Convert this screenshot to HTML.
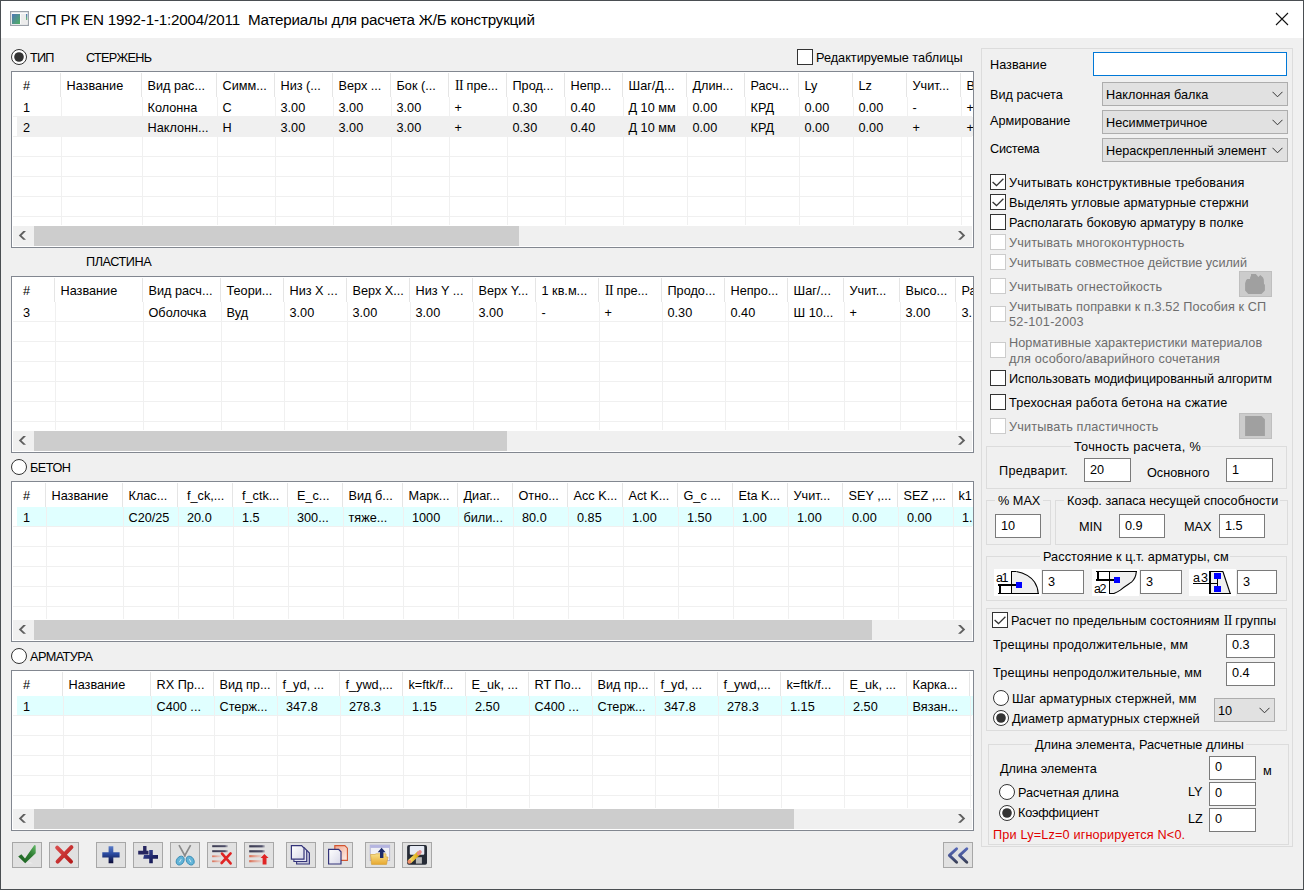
<!DOCTYPE html>
<html><head><meta charset="utf-8"><style>
html,body{margin:0;padding:0;width:1304px;height:890px;overflow:hidden;background:#f0f0f0}
#w{position:relative;width:1304px;height:890px;overflow:hidden;font-family:"Liberation Sans",sans-serif;font-size:12.7px;color:#000}
#w div,#w svg{position:absolute}
.t{line-height:20px;white-space:pre}
</style></head><body><div id="w">
<div style="left:0;top:0;width:1304px;height:890px;background:#f0f0f0"></div>
<div style="left:0px;top:0px;width:1304px;height:38px;background:#fff"></div>
<svg style="left:10px;top:11px" width="19" height="15" viewBox="0 0 19 15"><defs><linearGradient id="ig" x1="0" y1="0" x2="1" y2="1"><stop offset="0" stop-color="#4f76b8"/><stop offset="1" stop-color="#4fb060"/></linearGradient><linearGradient id="ig2" x1="0" y1="0" x2="0" y2="1"><stop offset="0" stop-color="#4f76b8"/><stop offset="1" stop-color="#6fc070"/></linearGradient></defs><rect x="0.6" y="0.6" width="17.8" height="13.8" fill="#fafafa" stroke="#9ca2aa" stroke-width="1.2"/><rect x="2" y="3" width="8" height="10" fill="url(#ig)"/><rect x="11" y="3" width="6" height="10" fill="#ececec"/><rect x="16" y="3" width="1.3" height="6" fill="url(#ig2)"/></svg>
<div class="t" style="left:35px;top:11px;font-size:15.2px;letter-spacing:-0.2px;top:8.5px;line-height:22px">СП РК EN 1992-1-1:2004/2011  Материалы для расчета Ж/Б конструкций</div>
<svg style="left:1275px;top:12px" width="14" height="14" viewBox="0 0 14 14"><path d="M1 1 L13 13 M13 1 L1 13" stroke="#111" stroke-width="1.1"/></svg>
<svg style="left:11px;top:49px" width="16" height="16" viewBox="0 0 16 16"><circle cx="8" cy="8" r="7.5" fill="#fff" stroke="#333" stroke-width="1"/><circle cx="8" cy="8" r="4.8" fill="#333"/></svg>
<div class="t" style="left:30px;top:48px;letter-spacing:-0.8px">ТИП</div>
<div class="t" style="left:86px;top:48px;letter-spacing:-0.7px">СТЕРЖЕНЬ</div>
<div style="left:797px;top:49px;width:16px;height:16px;box-sizing:border-box;border:1px solid #333333;background:#fff"></div>
<div class="t" style="left:816px;top:48px;">Редактируемые таблицы</div>
<div style="left:11px;top:71px;width:963px;height:177px;box-sizing:border-box;border:1px solid #828790;background:#fff"></div>
<div style="left:0;top:0;width:973px;height:890px;overflow:hidden">
<div style="left:13px;top:116px;width:959px;height:1px;background:#f0f0f0"></div>
<div style="left:13px;top:136px;width:959px;height:1px;background:#f0f0f0"></div>
<div style="left:13px;top:156px;width:959px;height:1px;background:#f0f0f0"></div>
<div style="left:13px;top:176px;width:959px;height:1px;background:#f0f0f0"></div>
<div style="left:13px;top:196px;width:959px;height:1px;background:#f0f0f0"></div>
<div style="left:13px;top:216px;width:959px;height:1px;background:#f0f0f0"></div>
<div style="left:17px;top:117px;width:956px;height:19px;background:#f0f0f0"></div>
<div style="left:61px;top:97px;width:1px;height:128px;background:#f0f0f0"></div>
<div style="left:60px;top:73px;width:1px;height:24px;background:#e5e5e5"></div>
<div style="left:142px;top:97px;width:1px;height:128px;background:#f0f0f0"></div>
<div style="left:141px;top:73px;width:1px;height:24px;background:#e5e5e5"></div>
<div style="left:217px;top:97px;width:1px;height:128px;background:#f0f0f0"></div>
<div style="left:216px;top:73px;width:1px;height:24px;background:#e5e5e5"></div>
<div style="left:275px;top:97px;width:1px;height:128px;background:#f0f0f0"></div>
<div style="left:274px;top:73px;width:1px;height:24px;background:#e5e5e5"></div>
<div style="left:333px;top:97px;width:1px;height:128px;background:#f0f0f0"></div>
<div style="left:332px;top:73px;width:1px;height:24px;background:#e5e5e5"></div>
<div style="left:391px;top:97px;width:1px;height:128px;background:#f0f0f0"></div>
<div style="left:390px;top:73px;width:1px;height:24px;background:#e5e5e5"></div>
<div style="left:449px;top:97px;width:1px;height:128px;background:#f0f0f0"></div>
<div style="left:448px;top:73px;width:1px;height:24px;background:#e5e5e5"></div>
<div style="left:507px;top:97px;width:1px;height:128px;background:#f0f0f0"></div>
<div style="left:506px;top:73px;width:1px;height:24px;background:#e5e5e5"></div>
<div style="left:565px;top:97px;width:1px;height:128px;background:#f0f0f0"></div>
<div style="left:564px;top:73px;width:1px;height:24px;background:#e5e5e5"></div>
<div style="left:623px;top:97px;width:1px;height:128px;background:#f0f0f0"></div>
<div style="left:622px;top:73px;width:1px;height:24px;background:#e5e5e5"></div>
<div style="left:687px;top:97px;width:1px;height:128px;background:#f0f0f0"></div>
<div style="left:686px;top:73px;width:1px;height:24px;background:#e5e5e5"></div>
<div style="left:745px;top:97px;width:1px;height:128px;background:#f0f0f0"></div>
<div style="left:744px;top:73px;width:1px;height:24px;background:#e5e5e5"></div>
<div style="left:799px;top:97px;width:1px;height:128px;background:#f0f0f0"></div>
<div style="left:798px;top:73px;width:1px;height:24px;background:#e5e5e5"></div>
<div style="left:853px;top:97px;width:1px;height:128px;background:#f0f0f0"></div>
<div style="left:852px;top:73px;width:1px;height:24px;background:#e5e5e5"></div>
<div style="left:907px;top:97px;width:1px;height:128px;background:#f0f0f0"></div>
<div style="left:906px;top:73px;width:1px;height:24px;background:#e5e5e5"></div>
<div style="left:961px;top:97px;width:1px;height:128px;background:#f0f0f0"></div>
<div style="left:960px;top:73px;width:1px;height:24px;background:#e5e5e5"></div>
<div class="t" style="left:23px;top:76px;">#</div>
<div class="t" style="left:66.5px;top:76px;">Название</div>
<div class="t" style="left:147.5px;top:76px;">Вид рас...</div>
<div class="t" style="left:222.5px;top:76px;">Симм...</div>
<div class="t" style="left:280.5px;top:76px;">Низ (...</div>
<div class="t" style="left:338.5px;top:76px;">Верх ...</div>
<div class="t" style="left:396.5px;top:76px;">Бок (...</div>
<div class="t" style="left:454.5px;top:76px;"><span style="font-family:'Liberation Serif',serif;font-size:13.6px;letter-spacing:-0.5px;margin-left:0.5px">II</span> пре...</div>
<div class="t" style="left:512.5px;top:76px;">Прод...</div>
<div class="t" style="left:570.5px;top:76px;">Непр...</div>
<div class="t" style="left:628.5px;top:76px;">Шаг/Д...</div>
<div class="t" style="left:692.5px;top:76px;">Длин...</div>
<div class="t" style="left:750.5px;top:76px;">Расч...</div>
<div class="t" style="left:804.5px;top:76px;">Ly</div>
<div class="t" style="left:858.5px;top:76px;">Lz</div>
<div class="t" style="left:912.5px;top:76px;">Учит...</div>
<div class="t" style="left:966.5px;top:76px;">В</div>
<div class="t" style="left:23px;top:98px;">1</div>
<div class="t" style="left:147.5px;top:98px;">Колонна</div>
<div class="t" style="left:222.5px;top:98px;">С</div>
<div class="t" style="left:280.5px;top:98px;">3.00</div>
<div class="t" style="left:338.5px;top:98px;">3.00</div>
<div class="t" style="left:396.5px;top:98px;">3.00</div>
<div class="t" style="left:454.5px;top:98px;">+</div>
<div class="t" style="left:512.5px;top:98px;">0.30</div>
<div class="t" style="left:570.5px;top:98px;">0.40</div>
<div class="t" style="left:628.5px;top:98px;">Д 10 мм</div>
<div class="t" style="left:692.5px;top:98px;">0.00</div>
<div class="t" style="left:750.5px;top:98px;">КРД</div>
<div class="t" style="left:804.5px;top:98px;">0.00</div>
<div class="t" style="left:858.5px;top:98px;">0.00</div>
<div class="t" style="left:912.5px;top:98px;">-</div>
<div class="t" style="left:966.5px;top:98px;">+</div>
<div class="t" style="left:23px;top:118px;">2</div>
<div class="t" style="left:147.5px;top:118px;">Наклонн...</div>
<div class="t" style="left:222.5px;top:118px;">Н</div>
<div class="t" style="left:280.5px;top:118px;">3.00</div>
<div class="t" style="left:338.5px;top:118px;">3.00</div>
<div class="t" style="left:396.5px;top:118px;">3.00</div>
<div class="t" style="left:454.5px;top:118px;">+</div>
<div class="t" style="left:512.5px;top:118px;">0.30</div>
<div class="t" style="left:570.5px;top:118px;">0.40</div>
<div class="t" style="left:628.5px;top:118px;">Д 10 мм</div>
<div class="t" style="left:692.5px;top:118px;">0.00</div>
<div class="t" style="left:750.5px;top:118px;">КРД</div>
<div class="t" style="left:804.5px;top:118px;">0.00</div>
<div class="t" style="left:858.5px;top:118px;">0.00</div>
<div class="t" style="left:912.5px;top:118px;">+</div>
<div class="t" style="left:966.5px;top:118px;">+</div>
<div style="left:13px;top:226px;width:959px;height:20px;background:#f0f0f0"></div>
<div style="left:34px;top:226px;width:485px;height:20px;background:#cdcdcd"></div>
<svg style="left:18px;top:231px" width="9" height="11" viewBox="0 0 9 11"><path d="M8 0 H5.3 L0.8 4.4 L5.3 8.8 H8 L3.5 4.4 Z" fill="#606060"/></svg>
<svg style="left:958px;top:231px" width="9" height="11" viewBox="0 0 9 11"><path d="M0 0 H2.7 L7.2 4.4 L2.7 8.8 H0 L4.5 4.4 Z" fill="#606060"/></svg>
</div>
<div class="t" style="left:86px;top:252px;letter-spacing:-0.45px">ПЛАСТИНА</div>
<div style="left:11px;top:276px;width:963px;height:177px;box-sizing:border-box;border:1px solid #828790;background:#fff"></div>
<div style="left:0;top:0;width:973px;height:890px;overflow:hidden">
<div style="left:13px;top:321px;width:959px;height:1px;background:#f0f0f0"></div>
<div style="left:13px;top:341px;width:959px;height:1px;background:#f0f0f0"></div>
<div style="left:13px;top:361px;width:959px;height:1px;background:#f0f0f0"></div>
<div style="left:13px;top:381px;width:959px;height:1px;background:#f0f0f0"></div>
<div style="left:13px;top:401px;width:959px;height:1px;background:#f0f0f0"></div>
<div style="left:13px;top:421px;width:959px;height:1px;background:#f0f0f0"></div>
<div style="left:55px;top:302px;width:1px;height:128px;background:#f0f0f0"></div>
<div style="left:54px;top:278px;width:1px;height:24px;background:#e5e5e5"></div>
<div style="left:143px;top:302px;width:1px;height:128px;background:#f0f0f0"></div>
<div style="left:142px;top:278px;width:1px;height:24px;background:#e5e5e5"></div>
<div style="left:221px;top:302px;width:1px;height:128px;background:#f0f0f0"></div>
<div style="left:220px;top:278px;width:1px;height:24px;background:#e5e5e5"></div>
<div style="left:284px;top:302px;width:1px;height:128px;background:#f0f0f0"></div>
<div style="left:283px;top:278px;width:1px;height:24px;background:#e5e5e5"></div>
<div style="left:347px;top:302px;width:1px;height:128px;background:#f0f0f0"></div>
<div style="left:346px;top:278px;width:1px;height:24px;background:#e5e5e5"></div>
<div style="left:410px;top:302px;width:1px;height:128px;background:#f0f0f0"></div>
<div style="left:409px;top:278px;width:1px;height:24px;background:#e5e5e5"></div>
<div style="left:473px;top:302px;width:1px;height:128px;background:#f0f0f0"></div>
<div style="left:472px;top:278px;width:1px;height:24px;background:#e5e5e5"></div>
<div style="left:536px;top:302px;width:1px;height:128px;background:#f0f0f0"></div>
<div style="left:535px;top:278px;width:1px;height:24px;background:#e5e5e5"></div>
<div style="left:599px;top:302px;width:1px;height:128px;background:#f0f0f0"></div>
<div style="left:598px;top:278px;width:1px;height:24px;background:#e5e5e5"></div>
<div style="left:662px;top:302px;width:1px;height:128px;background:#f0f0f0"></div>
<div style="left:661px;top:278px;width:1px;height:24px;background:#e5e5e5"></div>
<div style="left:725px;top:302px;width:1px;height:128px;background:#f0f0f0"></div>
<div style="left:724px;top:278px;width:1px;height:24px;background:#e5e5e5"></div>
<div style="left:788px;top:302px;width:1px;height:128px;background:#f0f0f0"></div>
<div style="left:787px;top:278px;width:1px;height:24px;background:#e5e5e5"></div>
<div style="left:844px;top:302px;width:1px;height:128px;background:#f0f0f0"></div>
<div style="left:843px;top:278px;width:1px;height:24px;background:#e5e5e5"></div>
<div style="left:900px;top:302px;width:1px;height:128px;background:#f0f0f0"></div>
<div style="left:899px;top:278px;width:1px;height:24px;background:#e5e5e5"></div>
<div style="left:956px;top:302px;width:1px;height:128px;background:#f0f0f0"></div>
<div style="left:955px;top:278px;width:1px;height:24px;background:#e5e5e5"></div>
<div class="t" style="left:23px;top:281px;">#</div>
<div class="t" style="left:60.5px;top:281px;">Название</div>
<div class="t" style="left:148.5px;top:281px;">Вид расч...</div>
<div class="t" style="left:226.5px;top:281px;">Теори...</div>
<div class="t" style="left:289.5px;top:281px;">Низ X ...</div>
<div class="t" style="left:352.5px;top:281px;">Верх X...</div>
<div class="t" style="left:415.5px;top:281px;">Низ Y ...</div>
<div class="t" style="left:478.5px;top:281px;">Верх Y...</div>
<div class="t" style="left:541.5px;top:281px;">1 кв.м...</div>
<div class="t" style="left:604.5px;top:281px;"><span style="font-family:'Liberation Serif',serif;font-size:13.6px;letter-spacing:-0.5px;margin-left:0.5px">II</span> пре...</div>
<div class="t" style="left:667.5px;top:281px;">Продо...</div>
<div class="t" style="left:730.5px;top:281px;">Непро...</div>
<div class="t" style="left:793.5px;top:281px;">Шаг/...</div>
<div class="t" style="left:849.5px;top:281px;">Учит...</div>
<div class="t" style="left:905.5px;top:281px;">Высо...</div>
<div class="t" style="left:961.5px;top:281px;">Ра</div>
<div class="t" style="left:23px;top:303px;">3</div>
<div class="t" style="left:148.5px;top:303px;">Оболочка</div>
<div class="t" style="left:226.5px;top:303px;">Вуд</div>
<div class="t" style="left:289.5px;top:303px;">3.00</div>
<div class="t" style="left:352.5px;top:303px;">3.00</div>
<div class="t" style="left:415.5px;top:303px;">3.00</div>
<div class="t" style="left:478.5px;top:303px;">3.00</div>
<div class="t" style="left:541.5px;top:303px;">-</div>
<div class="t" style="left:604.5px;top:303px;">+</div>
<div class="t" style="left:667.5px;top:303px;">0.30</div>
<div class="t" style="left:730.5px;top:303px;">0.40</div>
<div class="t" style="left:793.5px;top:303px;">Ш 10...</div>
<div class="t" style="left:849.5px;top:303px;">+</div>
<div class="t" style="left:905.5px;top:303px;">3.00</div>
<div class="t" style="left:961.5px;top:303px;">3.</div>
<div style="left:13px;top:431px;width:959px;height:20px;background:#f0f0f0"></div>
<div style="left:34px;top:431px;width:473px;height:20px;background:#cdcdcd"></div>
<svg style="left:18px;top:436px" width="9" height="11" viewBox="0 0 9 11"><path d="M8 0 H5.3 L0.8 4.4 L5.3 8.8 H8 L3.5 4.4 Z" fill="#606060"/></svg>
<svg style="left:958px;top:436px" width="9" height="11" viewBox="0 0 9 11"><path d="M0 0 H2.7 L7.2 4.4 L2.7 8.8 H0 L4.5 4.4 Z" fill="#606060"/></svg>
</div>
<svg style="left:11px;top:459px" width="16" height="16" viewBox="0 0 16 16"><circle cx="8" cy="8" r="7.5" fill="#fff" stroke="#333" stroke-width="1"/></svg>
<div class="t" style="left:30px;top:458px;letter-spacing:-0.5px">БЕТОН</div>
<div style="left:11px;top:481px;width:963px;height:161px;box-sizing:border-box;border:1px solid #828790;background:#fff"></div>
<div style="left:0;top:0;width:973px;height:890px;overflow:hidden">
<div style="left:13px;top:526px;width:959px;height:1px;background:#f0f0f0"></div>
<div style="left:13px;top:546px;width:959px;height:1px;background:#f0f0f0"></div>
<div style="left:13px;top:566px;width:959px;height:1px;background:#f0f0f0"></div>
<div style="left:13px;top:586px;width:959px;height:1px;background:#f0f0f0"></div>
<div style="left:13px;top:606px;width:959px;height:1px;background:#f0f0f0"></div>
<div style="left:17px;top:507px;width:956px;height:19px;background:#e0ffff"></div>
<div style="left:46px;top:507px;width:1px;height:112px;background:#f0f0f0"></div>
<div style="left:45px;top:483px;width:1px;height:24px;background:#e5e5e5"></div>
<div style="left:123px;top:507px;width:1px;height:112px;background:#f0f0f0"></div>
<div style="left:122px;top:483px;width:1px;height:24px;background:#e5e5e5"></div>
<div style="left:178px;top:507px;width:1px;height:112px;background:#f0f0f0"></div>
<div style="left:177px;top:483px;width:1px;height:24px;background:#e5e5e5"></div>
<div style="left:233px;top:507px;width:1px;height:112px;background:#f0f0f0"></div>
<div style="left:232px;top:483px;width:1px;height:24px;background:#e5e5e5"></div>
<div style="left:288px;top:507px;width:1px;height:112px;background:#f0f0f0"></div>
<div style="left:287px;top:483px;width:1px;height:24px;background:#e5e5e5"></div>
<div style="left:343px;top:507px;width:1px;height:112px;background:#f0f0f0"></div>
<div style="left:342px;top:483px;width:1px;height:24px;background:#e5e5e5"></div>
<div style="left:403px;top:507px;width:1px;height:112px;background:#f0f0f0"></div>
<div style="left:402px;top:483px;width:1px;height:24px;background:#e5e5e5"></div>
<div style="left:458px;top:507px;width:1px;height:112px;background:#f0f0f0"></div>
<div style="left:457px;top:483px;width:1px;height:24px;background:#e5e5e5"></div>
<div style="left:513px;top:507px;width:1px;height:112px;background:#f0f0f0"></div>
<div style="left:512px;top:483px;width:1px;height:24px;background:#e5e5e5"></div>
<div style="left:568px;top:507px;width:1px;height:112px;background:#f0f0f0"></div>
<div style="left:567px;top:483px;width:1px;height:24px;background:#e5e5e5"></div>
<div style="left:623px;top:507px;width:1px;height:112px;background:#f0f0f0"></div>
<div style="left:622px;top:483px;width:1px;height:24px;background:#e5e5e5"></div>
<div style="left:678px;top:507px;width:1px;height:112px;background:#f0f0f0"></div>
<div style="left:677px;top:483px;width:1px;height:24px;background:#e5e5e5"></div>
<div style="left:733px;top:507px;width:1px;height:112px;background:#f0f0f0"></div>
<div style="left:732px;top:483px;width:1px;height:24px;background:#e5e5e5"></div>
<div style="left:788px;top:507px;width:1px;height:112px;background:#f0f0f0"></div>
<div style="left:787px;top:483px;width:1px;height:24px;background:#e5e5e5"></div>
<div style="left:843px;top:507px;width:1px;height:112px;background:#f0f0f0"></div>
<div style="left:842px;top:483px;width:1px;height:24px;background:#e5e5e5"></div>
<div style="left:898px;top:507px;width:1px;height:112px;background:#f0f0f0"></div>
<div style="left:897px;top:483px;width:1px;height:24px;background:#e5e5e5"></div>
<div style="left:953px;top:507px;width:1px;height:112px;background:#f0f0f0"></div>
<div style="left:952px;top:483px;width:1px;height:24px;background:#e5e5e5"></div>
<div class="t" style="left:23px;top:486px;">#</div>
<div class="t" style="left:51.5px;top:486px;">Название</div>
<div class="t" style="left:128.5px;top:486px;">Клас...</div>
<div class="t" style="left:187px;top:486px;">f_ck,...</div>
<div class="t" style="left:242px;top:486px;">f_ctk...</div>
<div class="t" style="left:297px;top:486px;">E_c...</div>
<div class="t" style="left:348.5px;top:486px;">Вид б...</div>
<div class="t" style="left:408.5px;top:486px;">Марк...</div>
<div class="t" style="left:463.5px;top:486px;">Диаг...</div>
<div class="t" style="left:518.5px;top:486px;">Отно...</div>
<div class="t" style="left:573.5px;top:486px;">Acc K...</div>
<div class="t" style="left:628.5px;top:486px;">Act K...</div>
<div class="t" style="left:683.5px;top:486px;">G_c ...</div>
<div class="t" style="left:738.5px;top:486px;">Eta K...</div>
<div class="t" style="left:793.5px;top:486px;">Учит...</div>
<div class="t" style="left:848.5px;top:486px;">SEY ,...</div>
<div class="t" style="left:903.5px;top:486px;">SEZ ,...</div>
<div class="t" style="left:958.5px;top:486px;">k1...</div>
<div class="t" style="left:23px;top:508px;">1</div>
<div class="t" style="left:128.5px;top:508px;">C20/25</div>
<div class="t" style="left:187px;top:508px;">20.0</div>
<div class="t" style="left:242px;top:508px;">1.5</div>
<div class="t" style="left:297px;top:508px;">300...</div>
<div class="t" style="left:348.5px;top:508px;">тяже...</div>
<div class="t" style="left:412px;top:508px;">1000</div>
<div class="t" style="left:463.5px;top:508px;">били...</div>
<div class="t" style="left:522px;top:508px;">80.0</div>
<div class="t" style="left:577px;top:508px;">0.85</div>
<div class="t" style="left:632px;top:508px;">1.00</div>
<div class="t" style="left:687px;top:508px;">1.50</div>
<div class="t" style="left:742px;top:508px;">1.00</div>
<div class="t" style="left:797px;top:508px;">1.00</div>
<div class="t" style="left:852px;top:508px;">0.00</div>
<div class="t" style="left:907px;top:508px;">0.00</div>
<div class="t" style="left:962px;top:508px;">1.</div>
<div style="left:13px;top:620px;width:959px;height:20px;background:#f0f0f0"></div>
<div style="left:34px;top:620px;width:838px;height:20px;background:#cdcdcd"></div>
<svg style="left:18px;top:625px" width="9" height="11" viewBox="0 0 9 11"><path d="M8 0 H5.3 L0.8 4.4 L5.3 8.8 H8 L3.5 4.4 Z" fill="#606060"/></svg>
<svg style="left:958px;top:625px" width="9" height="11" viewBox="0 0 9 11"><path d="M0 0 H2.7 L7.2 4.4 L2.7 8.8 H0 L4.5 4.4 Z" fill="#606060"/></svg>
</div>
<svg style="left:11px;top:648px" width="16" height="16" viewBox="0 0 16 16"><circle cx="8" cy="8" r="7.5" fill="#fff" stroke="#333" stroke-width="1"/></svg>
<div class="t" style="left:30px;top:647px;letter-spacing:-0.55px">АРМАТУРА</div>
<div style="left:11px;top:670px;width:963px;height:161px;box-sizing:border-box;border:1px solid #828790;background:#fff"></div>
<div style="left:0;top:0;width:973px;height:890px;overflow:hidden">
<div style="left:13px;top:715px;width:959px;height:1px;background:#f0f0f0"></div>
<div style="left:13px;top:735px;width:959px;height:1px;background:#f0f0f0"></div>
<div style="left:13px;top:755px;width:959px;height:1px;background:#f0f0f0"></div>
<div style="left:13px;top:775px;width:959px;height:1px;background:#f0f0f0"></div>
<div style="left:13px;top:795px;width:959px;height:1px;background:#f0f0f0"></div>
<div style="left:17px;top:696px;width:956px;height:19px;background:#e0ffff"></div>
<div style="left:63px;top:696px;width:1px;height:112px;background:#f0f0f0"></div>
<div style="left:62px;top:672px;width:1px;height:24px;background:#e5e5e5"></div>
<div style="left:151px;top:696px;width:1px;height:112px;background:#f0f0f0"></div>
<div style="left:150px;top:672px;width:1px;height:24px;background:#e5e5e5"></div>
<div style="left:214px;top:696px;width:1px;height:112px;background:#f0f0f0"></div>
<div style="left:213px;top:672px;width:1px;height:24px;background:#e5e5e5"></div>
<div style="left:277px;top:696px;width:1px;height:112px;background:#f0f0f0"></div>
<div style="left:276px;top:672px;width:1px;height:24px;background:#e5e5e5"></div>
<div style="left:340px;top:696px;width:1px;height:112px;background:#f0f0f0"></div>
<div style="left:339px;top:672px;width:1px;height:24px;background:#e5e5e5"></div>
<div style="left:403px;top:696px;width:1px;height:112px;background:#f0f0f0"></div>
<div style="left:402px;top:672px;width:1px;height:24px;background:#e5e5e5"></div>
<div style="left:466px;top:696px;width:1px;height:112px;background:#f0f0f0"></div>
<div style="left:465px;top:672px;width:1px;height:24px;background:#e5e5e5"></div>
<div style="left:529px;top:696px;width:1px;height:112px;background:#f0f0f0"></div>
<div style="left:528px;top:672px;width:1px;height:24px;background:#e5e5e5"></div>
<div style="left:592px;top:696px;width:1px;height:112px;background:#f0f0f0"></div>
<div style="left:591px;top:672px;width:1px;height:24px;background:#e5e5e5"></div>
<div style="left:655px;top:696px;width:1px;height:112px;background:#f0f0f0"></div>
<div style="left:654px;top:672px;width:1px;height:24px;background:#e5e5e5"></div>
<div style="left:718px;top:696px;width:1px;height:112px;background:#f0f0f0"></div>
<div style="left:717px;top:672px;width:1px;height:24px;background:#e5e5e5"></div>
<div style="left:781px;top:696px;width:1px;height:112px;background:#f0f0f0"></div>
<div style="left:780px;top:672px;width:1px;height:24px;background:#e5e5e5"></div>
<div style="left:844px;top:696px;width:1px;height:112px;background:#f0f0f0"></div>
<div style="left:843px;top:672px;width:1px;height:24px;background:#e5e5e5"></div>
<div style="left:907px;top:696px;width:1px;height:112px;background:#f0f0f0"></div>
<div style="left:906px;top:672px;width:1px;height:24px;background:#e5e5e5"></div>
<div style="left:970px;top:696px;width:1px;height:112px;background:#f0f0f0"></div>
<div style="left:969px;top:672px;width:1px;height:24px;background:#e5e5e5"></div>
<div class="t" style="left:23px;top:675px;">#</div>
<div class="t" style="left:68.5px;top:675px;">Название</div>
<div class="t" style="left:156.5px;top:675px;">RX Пр...</div>
<div class="t" style="left:219.5px;top:675px;">Вид пр...</div>
<div class="t" style="left:282.5px;top:675px;">f_yd, ...</div>
<div class="t" style="left:345.5px;top:675px;">f_ywd,...</div>
<div class="t" style="left:408.5px;top:675px;">k=ftk/f...</div>
<div class="t" style="left:471.5px;top:675px;">E_uk, ...</div>
<div class="t" style="left:534.5px;top:675px;">RT По...</div>
<div class="t" style="left:597.5px;top:675px;">Вид пр...</div>
<div class="t" style="left:660.5px;top:675px;">f_yd, ...</div>
<div class="t" style="left:723.5px;top:675px;">f_ywd,...</div>
<div class="t" style="left:786.5px;top:675px;">k=ftk/f...</div>
<div class="t" style="left:849.5px;top:675px;">E_uk, ...</div>
<div class="t" style="left:912.5px;top:675px;">Карка...</div>
<div class="t" style="left:23px;top:697px;">1</div>
<div class="t" style="left:156.5px;top:697px;">C400 ...</div>
<div class="t" style="left:219.5px;top:697px;">Стерж...</div>
<div class="t" style="left:286px;top:697px;">347.8</div>
<div class="t" style="left:349px;top:697px;">278.3</div>
<div class="t" style="left:412px;top:697px;">1.15</div>
<div class="t" style="left:475px;top:697px;">2.50</div>
<div class="t" style="left:534.5px;top:697px;">C400 ...</div>
<div class="t" style="left:597.5px;top:697px;">Стерж...</div>
<div class="t" style="left:664px;top:697px;">347.8</div>
<div class="t" style="left:727px;top:697px;">278.3</div>
<div class="t" style="left:790px;top:697px;">1.15</div>
<div class="t" style="left:853px;top:697px;">2.50</div>
<div class="t" style="left:912.5px;top:697px;">Вязан...</div>
<div style="left:13px;top:809px;width:959px;height:20px;background:#f0f0f0"></div>
<div style="left:34px;top:809px;width:760px;height:20px;background:#cdcdcd"></div>
<svg style="left:18px;top:814px" width="9" height="11" viewBox="0 0 9 11"><path d="M8 0 H5.3 L0.8 4.4 L5.3 8.8 H8 L3.5 4.4 Z" fill="#606060"/></svg>
<svg style="left:958px;top:814px" width="9" height="11" viewBox="0 0 9 11"><path d="M0 0 H2.7 L7.2 4.4 L2.7 8.8 H0 L4.5 4.4 Z" fill="#606060"/></svg>
</div>
<div style="left:12px;top:842px;width:30px;height:26px;box-sizing:border-box;border:1px solid #a7a7a7;background:#e1e1e1"></div>
<svg style="left:12px;top:842px" width="30" height="26" viewBox="0 0 30 26"><g transform="translate(0,-2)"><defs><linearGradient id="gck" x1="0" y1="1" x2="1" y2="0"><stop offset="0" stop-color="#1b5e20"/><stop offset="0.6" stop-color="#2e7d32"/><stop offset="1" stop-color="#66bb6a"/></linearGradient></defs>
<path d="M6.2 16.4 L9.4 14.2 L13 18.6 L22.4 5 L23.7 5.6 L23.7 13.2 L13.2 23.3 Z" fill="url(#gck)"/><path d="M14 23.5 L21 23.5 L18 22 Z" fill="#f4f4f4" opacity="0.7"/></g></svg>
<div style="left:49px;top:842px;width:30px;height:26px;box-sizing:border-box;border:1px solid #a7a7a7;background:#e1e1e1"></div>
<svg style="left:49px;top:842px" width="30" height="26" viewBox="0 0 30 26"><g transform="translate(0,-2)"><defs><linearGradient id="gx" x1="0" y1="0" x2="1" y2="1"><stop offset="0" stop-color="#d84a4a"/><stop offset="1" stop-color="#b71c1c"/></linearGradient></defs>
<path d="M8.2 7.6 L22 21.6 M22.4 7.2 L8.6 21.6" stroke="url(#gx)" stroke-width="4" stroke-linecap="round"/></g></svg>
<div style="left:96px;top:842px;width:30px;height:26px;box-sizing:border-box;border:1px solid #a7a7a7;background:#e1e1e1"></div>
<svg style="left:96px;top:842px" width="30" height="26" viewBox="0 0 30 26"><g transform="translate(0,-2)"><defs><linearGradient id="gp" x1="0" y1="0" x2="0" y2="1"><stop offset="0" stop-color="#5a7cc8"/><stop offset="0.45" stop-color="#2a4aa0"/><stop offset="1" stop-color="#0c0c38"/></linearGradient></defs>
<path d="M12.6 6.2 H17.3 V12.2 H23.6 V17.6 H17.3 V23.2 H12.6 V17.6 H6.3 V12.2 H12.6 Z" fill="url(#gp)"/></g></svg>
<div style="left:133px;top:842px;width:30px;height:26px;box-sizing:border-box;border:1px solid #a7a7a7;background:#e1e1e1"></div>
<svg style="left:133px;top:842px" width="30" height="26" viewBox="0 0 30 26"><g transform="translate(0,-2)"><defs><linearGradient id="gp2" x1="0" y1="0" x2="1" y2="1"><stop offset="0" stop-color="#3a4aa0"/><stop offset="1" stop-color="#0c0c40"/></linearGradient></defs>
<path d="M10.1 6.1 H13.5 V10.8 H15.5 V14.6 H13.5 H10.1 H5.2 V10.8 H10.1 Z" fill="#262660"/>
<path d="M16.2 9.9 H19.8 V14.9 H25 V18.8 H19.8 V23.2 H16.2 V18.8 H10.2 L11 14.9 H16.2 Z" fill="url(#gp2)"/></g></svg>
<div style="left:170px;top:842px;width:30px;height:26px;box-sizing:border-box;border:1px solid #a7a7a7;background:#e1e1e1"></div>
<svg style="left:170px;top:842px" width="30" height="26" viewBox="0 0 30 26"><g transform="translate(0,-2)"><path d="M9 5.2 L15.4 16.6 M20.6 5.2 L14.2 16.6" stroke="#8a8a8a" stroke-width="1.7"/>
<ellipse cx="10.2" cy="20.6" rx="3.6" ry="4.8" transform="rotate(35 10.2 20.6)" fill="#62b4d8" stroke="#3a8cb4" stroke-width="0.9"/>
<ellipse cx="20.2" cy="20.6" rx="3.6" ry="4.8" transform="rotate(-35 20.2 20.6)" fill="#62b4d8" stroke="#3a8cb4" stroke-width="0.9"/>
<path d="M11.2 19.2 L9.4 22.2 M19.4 19.2 L21 22.2" stroke="#e0f0f8" stroke-width="0.9"/></g></svg>
<div style="left:207px;top:842px;width:30px;height:26px;box-sizing:border-box;border:1px solid #a7a7a7;background:#e1e1e1"></div>
<svg style="left:207px;top:842px" width="30" height="26" viewBox="0 0 30 26"><g transform="translate(0,-2)"><defs><linearGradient id="gl" x1="0" y1="0" x2="1" y2="0"><stop offset="0" stop-color="#3c3c52"/><stop offset="0.8" stop-color="#50506a"/><stop offset="1" stop-color="#50506a" stop-opacity="0.2"/></linearGradient><linearGradient id="gr" x1="0" y1="0" x2="1" y2="0"><stop offset="0" stop-color="#d86a50"/><stop offset="1" stop-color="#f0b0a0" stop-opacity="0.4"/></linearGradient></defs>
<rect x="5.2" y="5.2" width="15.8" height="2" fill="url(#gl)"/><rect x="5.2" y="10.2" width="15.8" height="2" fill="url(#gl)"/>
<rect x="5.2" y="15.4" width="9" height="1.8" fill="url(#gr)"/><rect x="5.2" y="20.4" width="9" height="1.8" fill="url(#gr)"/>
<path d="M15 13.6 L23.6 23.4 M23.6 13.4 L14.6 23" stroke="#e02424" stroke-width="2.6" stroke-linecap="round"/></g></svg>
<div style="left:244px;top:842px;width:30px;height:26px;box-sizing:border-box;border:1px solid #a7a7a7;background:#e1e1e1"></div>
<svg style="left:244px;top:842px" width="30" height="26" viewBox="0 0 30 26"><g transform="translate(0,-2)"><rect x="5.2" y="5.2" width="15.8" height="2.2" fill="url(#gl)"/><rect x="5.2" y="10.2" width="15.8" height="2.2" fill="url(#gl)"/>
<rect x="5.2" y="15.1" width="12.5" height="2.2" fill="url(#gr)"/><rect x="5.2" y="20.1" width="12.5" height="2.2" fill="url(#gr)"/>
<path d="M20.4 14 L24.6 18 H22.5 V24.5 H18.6 V18 H16.6 Z" fill="#e02424"/></g></svg>
<div style="left:286px;top:842px;width:30px;height:26px;box-sizing:border-box;border:1px solid #a7a7a7;background:#e1e1e1"></div>
<svg style="left:286px;top:842px" width="30" height="26" viewBox="0 0 30 26"><g transform="translate(0,-2)"><defs><linearGradient id="gpg" x1="0" y1="0" x2="1" y2="1"><stop offset="0" stop-color="#ffffff"/><stop offset="1" stop-color="#d8d8e8"/></linearGradient></defs>
<path d="M10.6 10.6 H21 L23.4 13 V24 H10.6 Z" fill="#c8c8dc" stroke="#34347a" stroke-width="1.1"/>
<path d="M7.9 7.9 H18.3 L20.7 10.3 V21.5 H7.9 Z" fill="#e4e4f0" stroke="#34347a" stroke-width="1.1"/>
<path d="M5.4 5.6 H15.6 L18 8 V19.2 H5.4 Z" fill="url(#gpg)" stroke="#34347a" stroke-width="1.2"/></g></svg>
<div style="left:323px;top:842px;width:30px;height:26px;box-sizing:border-box;border:1px solid #a7a7a7;background:#e1e1e1"></div>
<svg style="left:323px;top:842px" width="30" height="26" viewBox="0 0 30 26"><g transform="translate(0,-2)"><defs><linearGradient id="gpr" x1="0" y1="0" x2="1" y2="1"><stop offset="0" stop-color="#f0a890"/><stop offset="1" stop-color="#fff0ea"/></linearGradient></defs>
<path d="M11.8 5.6 H21.8 L24.4 8.2 V20.4 H11.8 Z" fill="url(#gpr)" stroke="#d25430" stroke-width="1.1"/>
<path d="M5.6 9.4 H15.6 L18 11.8 V24 H5.6 Z" fill="url(#gpg)" stroke="#34347a" stroke-width="1.2"/></g></svg>
<div style="left:365px;top:842px;width:30px;height:26px;box-sizing:border-box;border:1px solid #a7a7a7;background:#e1e1e1"></div>
<svg style="left:365px;top:842px" width="30" height="26" viewBox="0 0 30 26"><g transform="translate(0,-2)"><defs><linearGradient id="gf" x1="0" y1="0" x2="0" y2="1"><stop offset="0" stop-color="#f8e08a"/><stop offset="1" stop-color="#e8a830"/></linearGradient></defs>
<rect x="5.2" y="5.1" width="19.5" height="15.5" fill="#f0f0f6" stroke="#a8a8d0" stroke-width="0.8"/><rect x="5.2" y="5.1" width="19.5" height="2.8" fill="#b4b4e0"/>
<path d="M5.5 14.5 H10 L11 13.8 H21 V17 L23 17 L21.5 24.4 H6.5 Z" fill="url(#gf)" stroke="#d09a30" stroke-width="0.6"/>
<path d="M16.6 7.8 L20.6 12.3 H18.4 V17.9 H15 V12.3 H12.7 Z" fill="#1c2a6a"/></g></svg>
<div style="left:402px;top:842px;width:30px;height:26px;box-sizing:border-box;border:1px solid #a7a7a7;background:#e1e1e1"></div>
<svg style="left:402px;top:842px" width="30" height="26" viewBox="0 0 30 26"><g><defs><linearGradient id="gy" x1="0" y1="0" x2="1" y2="0"><stop offset="0" stop-color="#f8e070"/><stop offset="1" stop-color="#d8a000"/></linearGradient></defs>
<rect x="5.1" y="3.1" width="19.9" height="19.7" rx="1.8" fill="#262b36"/>
<rect x="7.8" y="3.9" width="14.5" height="8.9" rx="1" fill="#e6eaf4"/>
<rect x="13.9" y="15.2" width="6" height="6.4" fill="#b8b8b8"/>
<path d="M7.6 19.6 L17.2 10.8" stroke="url(#gy)" stroke-width="4.2"/>
<path d="M16.6 11.4 L18 10" stroke="#e88a8a" stroke-width="3.6" stroke-linecap="round"/>
<circle cx="7.4" cy="19.8" r="2" fill="#f0906a"/></g></svg>
<div style="left:943px;top:842px;width:30px;height:26px;box-sizing:border-box;border:1px solid #a7a7a7;background:#e1e1e1"></div>
<svg style="left:943px;top:842px" width="30" height="26" viewBox="0 0 30 26"><defs><linearGradient id="gch" x1="0" y1="0" x2="0" y2="1"><stop offset="0" stop-color="#5466b4"/><stop offset="0.6" stop-color="#46538e"/><stop offset="1" stop-color="#3a4058"/></linearGradient></defs><path d="M13.6 6.8 L6.4 13.4 L13.6 20.2 M23.8 6.8 L16.6 13.4 L23.8 20.2" fill="none" stroke="url(#gch)" stroke-width="2.9" stroke-linecap="round" stroke-linejoin="round"/></svg>
<div style="left:981px;top:48px;width:312px;height:799px;box-sizing:border-box;border:1px solid #dcdcdc"></div>
<div class="t" style="left:990px;top:55px;">Название</div>
<div style="left:1093px;top:52px;width:194px;height:24px;box-sizing:border-box;border:1px solid #0078d7;background:#fff"></div>
<div class="t" style="left:990px;top:85px;">Вид расчета</div>
<div style="left:1102px;top:82px;width:186px;height:24px;box-sizing:border-box;border:1px solid #adadad;background:#e1e1e1"></div>
<div class="t" style="left:1106px;top:85px;">Наклонная балка</div>
<svg style="left:1272px;top:91px" width="11" height="7" viewBox="0 0 11 7"><path d="M0.5 0.8 L5.5 5.8 L10.5 0.8" fill="none" stroke="#333" stroke-width="1"/></svg>
<div class="t" style="left:990px;top:111px;">Армирование</div>
<div style="left:1102px;top:110px;width:186px;height:24px;box-sizing:border-box;border:1px solid #adadad;background:#e1e1e1"></div>
<div class="t" style="left:1106px;top:113px;">Несимметричное</div>
<svg style="left:1272px;top:119px" width="11" height="7" viewBox="0 0 11 7"><path d="M0.5 0.8 L5.5 5.8 L10.5 0.8" fill="none" stroke="#333" stroke-width="1"/></svg>
<div class="t" style="left:990px;top:139px;letter-spacing:-0.27px">Система</div>
<div style="left:1102px;top:138px;width:186px;height:24px;box-sizing:border-box;border:1px solid #adadad;background:#e1e1e1"></div>
<div class="t" style="left:1106px;top:141px;">Нераскрепленный элемент</div>
<svg style="left:1272px;top:147px" width="11" height="7" viewBox="0 0 11 7"><path d="M0.5 0.8 L5.5 5.8 L10.5 0.8" fill="none" stroke="#333" stroke-width="1"/></svg>
<div style="left:990px;top:174px;width:16px;height:16px;box-sizing:border-box;border:1px solid #333333;background:#fff"></div>
<svg style="left:990px;top:174px" width="16" height="16" viewBox="0 0 16 16"><path d="M2.6 8 L6.5 11.6 L13.4 4.8" fill="none" stroke="#333" stroke-width="1.3"/></svg>
<div class="t" style="left:1009px;top:173px;letter-spacing:0.1px">Учитывать конструктивные требования</div>
<div style="left:990px;top:194px;width:16px;height:16px;box-sizing:border-box;border:1px solid #333333;background:#fff"></div>
<svg style="left:990px;top:194px" width="16" height="16" viewBox="0 0 16 16"><path d="M2.6 8 L6.5 11.6 L13.4 4.8" fill="none" stroke="#333" stroke-width="1.3"/></svg>
<div class="t" style="left:1009px;top:193px;letter-spacing:0.053px">Выделять угловые арматурные стержни</div>
<div style="left:990px;top:214px;width:16px;height:16px;box-sizing:border-box;border:1px solid #333333;background:#fff"></div>
<div class="t" style="left:1009px;top:213px;letter-spacing:0.07px">Располагать боковую арматуру в полке</div>
<div style="left:990px;top:234px;width:16px;height:16px;box-sizing:border-box;border:1px solid #cccccc;background:#fff"></div>
<div class="t" style="left:1009px;top:233px;color:#6d6d6d;letter-spacing:0.136px">Учитывать многоконтурность</div>
<div style="left:990px;top:254px;width:16px;height:16px;box-sizing:border-box;border:1px solid #cccccc;background:#fff"></div>
<div class="t" style="left:1009px;top:253px;color:#6d6d6d">Учитывать совместное действие усилий</div>
<div style="left:990px;top:278px;width:16px;height:16px;box-sizing:border-box;border:1px solid #cccccc;background:#fff"></div>
<div class="t" style="left:1009px;top:277px;color:#6d6d6d;letter-spacing:0.168px">Учитывать огнестойкость</div>
<div style="left:1239px;top:271px;width:33px;height:26px;box-sizing:border-box;border:1px solid #bfbfbf;background:#cccccc"></div>
<svg style="left:1239px;top:271px" width="33" height="26" viewBox="0 0 33 26"><path d="M12 3 H16.8 L19.4 6 L21.3 4 L24 6.5 L24.8 8.4 L25 13 L25.9 13.7 V19.4 L22.5 22.9 H9.3 L6.1 19.4 V12.2 L7.2 9.1 L8.4 8 H11 L11.2 6.1 L12 4.9 Z" fill="#a0a0a0"/></svg>
<div style="left:990px;top:306px;width:16px;height:16px;box-sizing:border-box;border:1px solid #cccccc;background:#fff"></div>
<div class="t" style="left:1009px;top:297px;color:#6d6d6d;letter-spacing:0.1px">Учитывать поправки к п.3.52 Пособия к СП</div>
<div class="t" style="left:1009px;top:312px;color:#6d6d6d;letter-spacing:0.27px">52-101-2003</div>
<div style="left:990px;top:342px;width:16px;height:16px;box-sizing:border-box;border:1px solid #cccccc;background:#fff"></div>
<div class="t" style="left:1009px;top:333px;color:#6d6d6d;letter-spacing:0.053px">Нормативные характеристики материалов</div>
<div class="t" style="left:1009px;top:349px;color:#6d6d6d;letter-spacing:0.15px">для особого/аварийного сочетания</div>
<div style="left:990px;top:370px;width:16px;height:16px;box-sizing:border-box;border:1px solid #333333;background:#fff"></div>
<div class="t" style="left:1009px;top:369px;">Использовать модифицированный алгоритм</div>
<div style="left:990px;top:394px;width:16px;height:16px;box-sizing:border-box;border:1px solid #333333;background:#fff"></div>
<div class="t" style="left:1009px;top:393px;letter-spacing:0.175px">Трехосная работа бетона на сжатие</div>
<div style="left:990px;top:418px;width:16px;height:16px;box-sizing:border-box;border:1px solid #cccccc;background:#fff"></div>
<div class="t" style="left:1009px;top:417px;color:#6d6d6d;letter-spacing:0.16px">Учитывать пластичность</div>
<div style="left:1239px;top:413px;width:33px;height:26px;box-sizing:border-box;border:1px solid #bfbfbf;background:#cccccc"></div>
<svg style="left:1239px;top:413px" width="33" height="26" viewBox="0 0 33 26"><path d="M6.1 3 H22.5 L25.9 6.3 V22.9 H6.1 Z" fill="#a0a0a0"/></svg>
<div style="left:986px;top:446px;width:301px;height:43px;box-sizing:border-box;border:1px solid #dcdcdc"></div>
<div style="left:1071px;top:445px;width:131px;height:3px;background:#f0f0f0"></div>
<div class="t" style="left:1074px;top:437px;letter-spacing:0.31px">Точность расчета, %</div>
<div class="t" style="left:999px;top:461px;letter-spacing:0.31px">Предварит.</div>
<div style="left:1084px;top:458px;width:47px;height:24px;box-sizing:border-box;border:1px solid #7a7a7a;background:#fff"></div>
<div class="t" style="left:1090px;top:460px;">20</div>
<div class="t" style="left:1147px;top:463px;">Основного</div>
<div style="left:1226px;top:458px;width:47px;height:24px;box-sizing:border-box;border:1px solid #7a7a7a;background:#fff"></div>
<div class="t" style="left:1232px;top:460px;">1</div>
<div style="left:986px;top:500px;width:65px;height:45px;box-sizing:border-box;border:1px solid #dcdcdc"></div>
<div style="left:995px;top:499px;width:48px;height:3px;background:#f0f0f0"></div>
<div class="t" style="left:998px;top:491px;">% MAX</div>
<div style="left:995px;top:514px;width:46px;height:24px;box-sizing:border-box;border:1px solid #7a7a7a;background:#fff"></div>
<div class="t" style="left:1001px;top:516px;">10</div>
<div style="left:1055px;top:500px;width:233px;height:45px;box-sizing:border-box;border:1px solid #dcdcdc"></div>
<div style="left:1064px;top:499px;width:216px;height:3px;background:#f0f0f0"></div>
<div class="t" style="left:1067px;top:491px;">Коэф. запаса несущей способности</div>
<div class="t" style="left:1079px;top:517px;">MIN</div>
<div style="left:1119px;top:514px;width:46px;height:24px;box-sizing:border-box;border:1px solid #7a7a7a;background:#fff"></div>
<div class="t" style="left:1125px;top:516px;">0.9</div>
<div class="t" style="left:1184px;top:517px;">MAX</div>
<div style="left:1219px;top:514px;width:46px;height:24px;box-sizing:border-box;border:1px solid #7a7a7a;background:#fff"></div>
<div class="t" style="left:1225px;top:516px;">1.5</div>
<div style="left:986px;top:556px;width:301px;height:45px;box-sizing:border-box;border:1px solid #dcdcdc"></div>
<div style="left:1040px;top:555px;width:190px;height:3px;background:#f0f0f0"></div>
<div class="t" style="left:1043px;top:547px;letter-spacing:0.08px">Расстояние к ц.т. арматуры, см</div>
<svg style="left:994px;top:569px" width="47" height="27" viewBox="0 0 47 27"><rect width="47" height="27" fill="#fff"/>
<path d="M18 2.5 H22.3 C30 4 38 9 41.5 16 C43.5 19 44 21.5 44.2 24 H18 Z" fill="#efefef"/>
<g shape-rendering="crispEdges" fill="#000">
<rect x="17" y="2" width="1" height="23"/><rect x="17" y="2" width="5" height="1"/><rect x="4" y="24" width="41" height="1"/>
<rect x="4" y="15" width="18" height="2"/><rect x="5" y="15" width="2" height="10"/>
</g>
<path d="M22.3 2.5 C30 4 37 8 40.5 13 C42.5 16 44 20 44.2 24.5" fill="none" stroke="#000" stroke-width="1.1"/>
<rect x="22" y="13" width="6" height="6" fill="#0000ff" shape-rendering="crispEdges"/>
<text x="2" y="12.7" font-family="Liberation Sans" font-size="12.5" fill="#000" textLength="12.5">a1</text></svg>
<svg style="left:1092px;top:569px" width="47" height="27" viewBox="0 0 47 27"><rect width="47" height="27" fill="#fff"/>
<path d="M18 2.5 H44.2 C43.5 10 40 14 35 16 C30 19 26 22 21.9 24 H18 Z" fill="#efefef"/>
<g shape-rendering="crispEdges" fill="#000">
<rect x="17" y="2" width="1" height="23"/><rect x="4" y="2" width="41" height="1"/><rect x="17" y="24" width="5" height="1"/>
<rect x="4" y="10" width="18" height="2"/><rect x="5" y="2" width="2" height="10"/>
</g>
<path d="M44.3 2.8 C44 7 42 11 39.5 13.1 C37 15 33 17 28.3 21.1 C26 22.5 24 23.5 21.9 24.5" fill="none" stroke="#000" stroke-width="1.1"/>
<rect x="22" y="8" width="6" height="6" fill="#0000ff" shape-rendering="crispEdges"/>
<text x="2" y="23.9" font-family="Liberation Sans" font-size="12.5" fill="#000" textLength="12.5">a2</text></svg>
<svg style="left:1189px;top:569px" width="47" height="27" viewBox="0 0 47 27"><rect width="47" height="27" fill="#fff"/>
<path d="M21 2.5 H33.9 L41 24 H21 Z" fill="#efefef"/>
<g shape-rendering="crispEdges" fill="#000">
<rect x="20" y="2" width="2" height="23"/><rect x="20" y="2" width="14" height="1"/><rect x="20" y="24" width="22" height="1"/>
<rect x="4" y="14" width="24" height="1"/><rect x="28" y="10" width="1" height="7"/>
</g>
<path d="M33.9 2.5 L41.2 24.5" stroke="#000" stroke-width="1.1"/>
<rect x="25" y="4" width="7" height="6" fill="#0000ff" shape-rendering="crispEdges"/><rect x="25" y="17" width="7" height="6" fill="#0000ff" shape-rendering="crispEdges"/>
<text x="4" y="12.7" font-family="Liberation Sans" font-size="12.5" fill="#000" textLength="15">a3</text></svg>
<div style="left:1042px;top:570px;width:42px;height:24px;box-sizing:border-box;border:1px solid #7a7a7a;background:#fff"></div>
<div class="t" style="left:1048px;top:572px;">3</div>
<div style="left:1140px;top:570px;width:42px;height:24px;box-sizing:border-box;border:1px solid #7a7a7a;background:#fff"></div>
<div class="t" style="left:1146px;top:572px;">3</div>
<div style="left:1237px;top:570px;width:40px;height:24px;box-sizing:border-box;border:1px solid #7a7a7a;background:#fff"></div>
<div class="t" style="left:1243px;top:572px;">3</div>
<div style="left:986px;top:608px;width:301px;height:123px;box-sizing:border-box;border:1px solid #dcdcdc"></div>
<div style="left:992px;top:612px;width:16px;height:16px;box-sizing:border-box;border:1px solid #333333;background:#fff"></div>
<svg style="left:992px;top:612px" width="16" height="16" viewBox="0 0 16 16"><path d="M2.6 8 L6.5 11.6 L13.4 4.8" fill="none" stroke="#333" stroke-width="1.3"/></svg>
<div class="t" style="left:1011px;top:611px;letter-spacing:0.03px">Расчет по предельным состояниям <span style="font-family:'Liberation Serif',serif;font-size:13.6px;letter-spacing:-0.5px;margin-left:0.5px">II</span> группы</div>
<div class="t" style="left:993px;top:635px;letter-spacing:0.18px">Трещины продолжительные, мм</div>
<div style="left:1226px;top:634px;width:49px;height:24px;box-sizing:border-box;border:1px solid #7a7a7a;background:#fff"></div>
<div class="t" style="left:1232px;top:635px;">0.3</div>
<div class="t" style="left:993px;top:663px;letter-spacing:0.164px">Трещины непродолжительные, мм</div>
<div style="left:1226px;top:662px;width:49px;height:24px;box-sizing:border-box;border:1px solid #7a7a7a;background:#fff"></div>
<div class="t" style="left:1232px;top:663px;">0.4</div>
<svg style="left:993px;top:690px" width="16" height="16" viewBox="0 0 16 16"><circle cx="8" cy="8" r="7.5" fill="#fff" stroke="#333" stroke-width="1"/></svg>
<div class="t" style="left:1012px;top:689px;letter-spacing:0.096px">Шаг арматурных стержней, мм</div>
<svg style="left:993px;top:710px" width="16" height="16" viewBox="0 0 16 16"><circle cx="8" cy="8" r="7.5" fill="#fff" stroke="#333" stroke-width="1"/><circle cx="8" cy="8" r="4.8" fill="#333"/></svg>
<div class="t" style="left:1012px;top:709px;letter-spacing:0.1px">Диаметр арматурных стержней</div>
<div style="left:1214px;top:698px;width:61px;height:24px;box-sizing:border-box;border:1px solid #adadad;background:#e1e1e1"></div>
<div class="t" style="left:1218px;top:701px;">10</div>
<svg style="left:1259px;top:707px" width="11" height="7" viewBox="0 0 11 7"><path d="M0.5 0.8 L5.5 5.8 L10.5 0.8" fill="none" stroke="#333" stroke-width="1"/></svg>
<div style="left:988px;top:744px;width:301px;height:101px;box-sizing:border-box;border:1px solid #dcdcdc"></div>
<div style="left:1032px;top:743px;width:214px;height:3px;background:#f0f0f0"></div>
<div class="t" style="left:1035px;top:735px;">Длина элемента, Расчетные длины</div>
<div class="t" style="left:1000px;top:759px;">Длина элемента</div>
<div style="left:1209px;top:756px;width:47px;height:24px;box-sizing:border-box;border:1px solid #7a7a7a;background:#fff"></div>
<div class="t" style="left:1215px;top:757px;">0</div>
<div class="t" style="left:1263px;top:761px;">м</div>
<svg style="left:999px;top:784px" width="16" height="16" viewBox="0 0 16 16"><circle cx="8" cy="8" r="7.5" fill="#fff" stroke="#333" stroke-width="1"/></svg>
<div class="t" style="left:1018px;top:783px;">Расчетная длина</div>
<svg style="left:999px;top:805px" width="16" height="16" viewBox="0 0 16 16"><circle cx="8" cy="8" r="7.5" fill="#fff" stroke="#333" stroke-width="1"/><circle cx="8" cy="8" r="4.8" fill="#333"/></svg>
<div class="t" style="left:1018px;top:803px;letter-spacing:-0.19px">Коэффициент</div>
<div class="t" style="left:1188px;top:782px;">LY</div>
<div style="left:1209px;top:782px;width:47px;height:24px;box-sizing:border-box;border:1px solid #7a7a7a;background:#fff"></div>
<div class="t" style="left:1215px;top:783px;">0</div>
<div class="t" style="left:1188px;top:809px;">LZ</div>
<div style="left:1209px;top:808px;width:47px;height:24px;box-sizing:border-box;border:1px solid #7a7a7a;background:#fff"></div>
<div class="t" style="left:1215px;top:809px;">0</div>
<div class="t" style="left:993px;top:825px;color:#e00000;letter-spacing:0.157px">При Ly=Lz=0 игнорируется N&lt;0.</div>
<div style="left:0px;top:0px;width:1304px;height:890px;box-sizing:border-box;border:1px solid #4a4e52"></div>
</div></body></html>
